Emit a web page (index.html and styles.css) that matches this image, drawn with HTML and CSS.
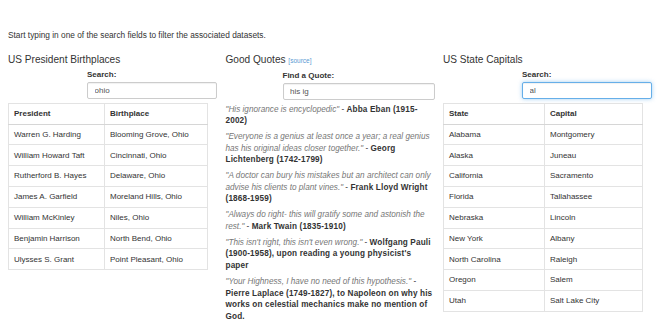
FILE: index.html
```html
<!DOCTYPE html>
<html>
<head>
<meta charset="utf-8">
<link rel="stylesheet" href="styles.css">
</head>
<body>
<div class="page">
  <p class="intro">Start typing in one of the search fields to filter the associated datasets.</p>
  <div class="grid">
    <section class="col">
      <h4 class="title">US President Birthplaces</h4>
      <div class="filter">
        <label class="filter-label">Search:</label>
        <input class="filter-input" type="text" value="ohio">
      </div>
      <table class="data">
        <thead>
          <tr><th class="w-pres">President</th><th>Birthplace</th></tr>
        </thead>
        <tbody>
          <tr><td>Warren G. Harding</td><td>Blooming Grove, Ohio</td></tr>
          <tr><td>William Howard Taft</td><td>Cincinnati, Ohio</td></tr>
          <tr><td>Rutherford B. Hayes</td><td>Delaware, Ohio</td></tr>
          <tr><td>James A. Garfield</td><td>Moreland Hills, Ohio</td></tr>
          <tr><td>William McKinley</td><td>Niles, Ohio</td></tr>
          <tr><td>Benjamin Harrison</td><td>North Bend, Ohio</td></tr>
          <tr><td>Ulysses S. Grant</td><td>Point Pleasant, Ohio</td></tr>
        </tbody>
      </table>
    </section>
    <section class="col">
      <h4 class="title">Good Quotes <a class="source" href="#">[source]</a></h4>
      <div class="filter">
        <label class="filter-label">Find a Quote:</label>
        <input class="filter-input wide" type="text" value="his ig">
      </div>
      <div class="quotes">
        <p><em>"His ignorance is encyclopedic"</em> - <strong>Abba Eban (1915-2002)</strong></p>
        <p><em>"Everyone is a genius at least once a year; a real genius has his original ideas closer together."</em> - <strong>Georg Lichtenberg (1742-1799)</strong></p>
        <p><em>"A doctor can bury his mistakes but an architect can only advise his clients to plant vines."</em> - <strong>Frank Lloyd Wright (1868-1959)</strong></p>
        <p><em>"Always do right- this will gratify some and astonish the rest."</em> - <strong>Mark Twain (1835-1910)</strong></p>
        <p><em>"This isn't right, this isn't even wrong."</em> - <strong>Wolfgang Pauli (1900-1958), upon reading a young physicist's paper</strong></p>
        <p><em>"Your Highness, I have no need of this hypothesis."</em> - <strong>Pierre Laplace (1749-1827), to Napoleon on why his works on celestial mechanics make no mention of God.</strong></p>
      </div>
    </section>
    <section class="col">
      <h4 class="title">US State Capitals</h4>
      <div class="filter">
        <label class="filter-label">Search:</label>
        <input class="filter-input focused" type="text" value="al">
      </div>
      <table class="data">
        <thead>
          <tr><th class="w-state">State</th><th>Capital</th></tr>
        </thead>
        <tbody>
          <tr><td>Alabama</td><td>Montgomery</td></tr>
          <tr><td>Alaska</td><td>Juneau</td></tr>
          <tr><td>California</td><td>Sacramento</td></tr>
          <tr><td>Florida</td><td>Tallahassee</td></tr>
          <tr><td>Nebraska</td><td>Lincoln</td></tr>
          <tr><td>New York</td><td>Albany</td></tr>
          <tr><td>North Carolina</td><td>Raleigh</td></tr>
          <tr><td>Oregon</td><td>Salem</td></tr>
          <tr><td>Utah</td><td>Salt Lake City</td></tr>
        </tbody>
      </table>
    </section>
  </div>
</div>
</body>
</html>
```
FILE: styles.css
```css
html, body {
  margin: 0;
  padding: 0;
  background: #fff;
}
body {
  font-family: "Liberation Sans", Arial, sans-serif;
  font-size: 8px;
  line-height: 11.4px;
  color: #333;
}
.page {
  padding: 30px 8px 0 8px;
}
.intro {
  margin: 0 0 13px 0;
  font-size: 8.3px;
}
.grid {
  display: grid;
  grid-template-columns: 209px 209px 209px;
  column-gap: 8.5px;
  align-items: start;
}
.col {
  display: flex;
  flex-direction: column;
}
.title {
  margin: 0 0 2.7px 0;
  font-size: 10.1px;
  line-height: 11.4px;
  font-weight: normal;
  color: #333;
}
.source {
  font-size: 6.5px;
  color: #5a9bd3;
  text-decoration: none;
}
.filter {
  align-self: flex-end;
  display: flex;
  flex-direction: column;
}
.filter-label {
  font-weight: bold;
  font-size: 8px;
  line-height: 11.4px;
  margin-bottom: 1.8px;
}
.filter-input {
  box-sizing: border-box;
  width: 130px;
  height: 17.6px;
  margin: 0;
  padding: 0 6.5px;
  border: 1px solid #ccc;
  border-radius: 2px;
  font-family: "Liberation Sans", Arial, sans-serif;
  font-size: 8px;
  color: #555;
  background: #fff;
  box-shadow: inset 0 1px 1px rgba(0,0,0,0.06);
  outline: none;
}
.filter-input.wide {
  width: 152px;
}
.filter-input.focused {
  border-color: #66afe9;
  box-shadow: inset 0 1px 1px rgba(0,0,0,0.06), 0 0 4px rgba(102,175,233,0.6);
}
.data {
  margin-top: 3.6px;
  width: 200px;
  border-collapse: collapse;
  border: 1px solid #ddd;
  table-layout: fixed;
}
.data th, .data td {
  padding: 4.2px 5px;
  line-height: 11.4px;
  text-align: left;
  border: 1px solid #e3e3e3;
  white-space: nowrap;
  overflow: hidden;
}
.data th {
  font-weight: bold;
  border-bottom: 1px solid #d6d6d6;
}
.data td {
  border-top: 1px solid #e6e6e6;
}
.w-pres {
  width: 96px;
  box-sizing: border-box;
}
.w-state {
  width: 101px;
  box-sizing: border-box;
}
.quotes {
  margin-top: 3.3px;
  font-size: 8.2px;
}
.quotes p {
  margin: 0 0 4.6px 0;
  line-height: 11.5px;
}
.quotes em {
  color: #777;
}
.quotes strong {
  color: #333;
  letter-spacing: 0.15px;
}
```
